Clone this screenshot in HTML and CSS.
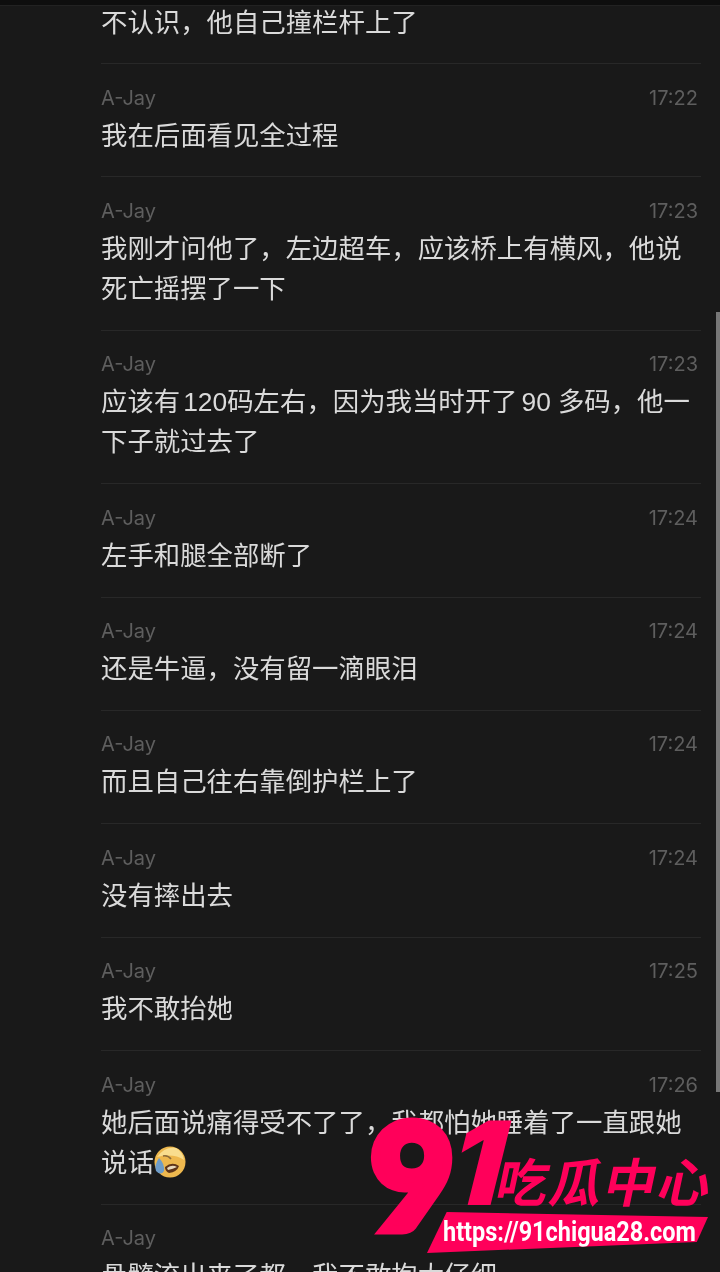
FILE: index.html
```html
<!DOCTYPE html>
<html lang="zh-CN">
<head>
    <meta charset="UTF-8">
    <meta name="viewport" content="width=device-width, initial-scale=1.0">
    <title>A-Jay</title>
    <link rel="stylesheet" href="styles.css">
</head>
<body>
    <div class="top-bar"></div>
    <div class="scrollbar"></div>

    <!-- Chat messages -->
    <div class="chat">
        <div class="msg first">
            <p class="text">不认识，他自己撞栏杆上了</p>
        </div>
        <div class="msg">
            <div class="meta"><span>A-Jay</span><span>17:22</span></div>
            <p class="text">我在后面看见全过程</p>
        </div>
        <div class="msg">
            <div class="meta"><span>A-Jay</span><span>17:23</span></div>
            <p class="text">我刚才问他了，左边超车，应该桥上有横风，他说<br>死亡摇摆了一下</p>
        </div>
        <div class="msg">
            <div class="meta"><span>A-Jay</span><span>17:23</span></div>
            <p class="text">应该有<span class="num">120</span>码左右，因为我当时开了<span class="num spaced">90</span>多码，他一<br>下子就过去了</p>
        </div>
        <div class="msg">
            <div class="meta"><span>A-Jay</span><span>17:24</span></div>
            <p class="text">左手和腿全部断了</p>
        </div>
        <div class="msg">
            <div class="meta"><span>A-Jay</span><span>17:24</span></div>
            <p class="text">还是牛逼，没有留一滴眼泪</p>
        </div>
        <div class="msg">
            <div class="meta"><span>A-Jay</span><span>17:24</span></div>
            <p class="text">而且自己往右靠倒护栏上了</p>
        </div>
        <div class="msg">
            <div class="meta"><span>A-Jay</span><span>17:24</span></div>
            <p class="text">没有摔出去</p>
        </div>
        <div class="msg">
            <div class="meta"><span>A-Jay</span><span>17:25</span></div>
            <p class="text">我不敢抬她</p>
        </div>
        <div class="msg">
            <div class="meta"><span>A-Jay</span><span>17:26</span></div>
            <p class="text">她后面说痛得受不了了，我都怕她睡着了一直跟她<br>说话<svg class="emoji" viewBox="0 0 32 32">
                <circle cx="16" cy="16" r="15.5" fill="#eeb84e"/>
                <path d="M3 11 Q11 0 22 2 Q29 6 30 14 Q20 7 3 11Z" fill="#f9dd8e"/>
                <path d="M11 21 Q18 15 25 20 Q23 26 15 27 Q11 25 11 21Z" fill="#5e3418"/>
                <path d="M13 22 Q18 18 23 21 Q19 23 14 24Z" fill="#e8d8bc"/>
                <path d="M9 10 Q14 9 17 13" stroke="#8a6a3a" stroke-width="1.6" fill="none"/>
                <path d="M5 12 Q0 19 2 25 Q7 30 10 25 Q11 18 5 12Z" fill="#6e9cc8"/>
            </svg></p>
        </div>
        <div class="msg">
            <div class="meta"><span>A-Jay</span></div>
            <p class="text">骨髓流出来了都，我不敢抱太仔细</p>
        </div>
    </div>

    <!-- Watermark -->
    <div class="logo">
        <span class="logo-nine">9</span>
        <span class="logo-one">1</span>
        <span class="logo-name">吃瓜中心</span>
        <div class="logo-band"><span class="logo-url">https://91chigua28.com</span></div>
    </div>
</body>
</html>
```

FILE: styles.css
```css
* {
  margin: 0;
  padding: 0;
  box-sizing: border-box;
}

html, body {
  height: 1272px;
  overflow: hidden;
}

body {
  position: relative;
  background-color: #191919;
  font-family: "Liberation Sans", "Noto Sans CJK SC", sans-serif;
}

.top-bar {
  height: 6px;
  background-color: #0e0e0e;
  border-bottom: 1px solid #222;
}

.scrollbar {
  position: absolute;
  top: 312px;
  right: 0;
  width: 4px;
  height: 780px;
  background-color: #777;
}

.chat {
  margin-left: 101px;
  width: 600px;
  filter: blur(0.4px);
}

.msg {
  padding: 19.5px 0 22.9px;
  border-bottom: 1px solid #282828;
}

.msg.first {
  margin-top: -5px;
  padding: 0;
  height: 63px;
}

.meta {
  display: flex;
  justify-content: space-between;
  padding-right: 3px;
  height: 30px;
  line-height: 28px;
  font-family: "Inter", sans-serif;
  font-size: 20px;
  color: #5e5e5e;
}

.text {
  font-family: "Noto Sans CJK SC", sans-serif;
  font-size: 26.4px;
  line-height: 40px;
  color: #dadada;
  white-space: nowrap;
}

.num {
  font-family: "Liberation Sans", sans-serif;
  line-height: 1;
  margin-left: 3px;
}

.num.spaced {
  margin: 0 7px 0 4px;
}

.emoji {
  width: 32px;
  height: 32px;
  vertical-align: -6px;
  filter: blur(0.7px);
}

/* Watermark over the chat */
.logo {
  position: absolute;
  left: 360px;
  top: 1110px;
  width: 360px;
  height: 162px;
}

.logo-nine {
  position: absolute;
  left: 10px;
  top: -31px;
  font-family: "Lato", sans-serif;
  font-weight: 900;
  font-size: 146px;
  line-height: 190px;
  color: #ff005a;
  -webkit-text-stroke: 9px #ff005a;
}

.logo-one {
  position: absolute;
  left: 94px;
  top: -22px;
  font-family: "Inter", sans-serif;
  font-weight: 900;
  font-size: 116px;
  line-height: 150px;
  color: #ff005a;
  transform: skewX(-14deg);
}

.logo-name {
  position: absolute;
  left: 138px;
  top: 40px;
  font-family: "Noto Sans CJK SC", sans-serif;
  font-weight: 700;
  font-size: 52px;
  line-height: 60px;
  letter-spacing: 2px;
  white-space: nowrap;
  color: #ff005a;
  transform: skewX(-12deg);
}

.logo-band {
  position: absolute;
  left: 67px;
  top: 102px;
  width: 281px;
  height: 41px;
  background-color: #ff005a;
  clip-path: polygon(7% 0, 100% 12%, 96% 73%, 0 100%);
}

.logo-url {
  display: block;
  margin: 5px 0 0 16px;
  font-family: "Roboto", sans-serif;
  font-weight: 700;
  font-size: 27px;
  line-height: 30px;
  color: #fff;
  white-space: nowrap;
  transform: scaleX(0.87);
  transform-origin: left center;
}
```
